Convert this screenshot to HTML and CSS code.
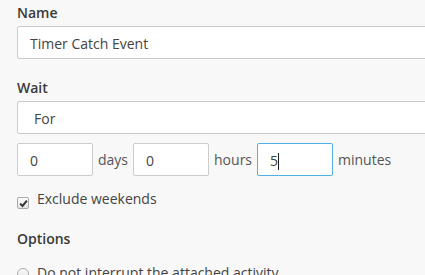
FILE: index.html
```html
<!DOCTYPE html>
<html>
<head>
<meta charset="utf-8">
<link rel="stylesheet" href="styles.css">
</head>
<body>
<div class="panel">
  <div class="group first">
    <label class="label">Name</label>
    <div class="field">Timer Catch Event</div>
  </div>
  <div class="group wait">
    <label class="label">Wait</label>
    <div class="field select">For</div>
  </div>
  <div class="duration">
    <div class="small-input">0</div>
    <span class="unit">days</span>
    <div class="small-input">0</div>
    <span class="unit">hours</span>
    <div class="small-input focused">5<span class="caret"></span></div>
    <span class="unit">minutes</span>
  </div>
  <div class="check-row">
    <span class="checkbox">
      <svg width="9" height="9" viewBox="0 0 9 9"><path d="M1.2 4.6 L3.5 7 L7.9 1.6" fill="none" stroke="#333" stroke-width="2"/></svg>
    </span>
    <span class="check-text">Exclude weekends</span>
  </div>
  <div class="label options">Options</div>
  <div class="radio-row">
    <span class="radio"></span>
    <span class="check-text">Do not interrupt the attached activity</span>
  </div>
</div>
</body>
</html>
```
FILE: styles.css
```css
html, body {
  margin: 0;
  padding: 0;
  background: #f8f8f8;
  overflow: hidden;
}
body {
  width: 425px;
  height: 275px;
  font-family: "Open Sans", "Liberation Sans", sans-serif;
  font-size: 14px;
  line-height: 20px;
  color: #444;
}
.panel {
  padding: 3px 0 0 17px;
}
.group {
  display: flex;
  flex-direction: column;
}
.wait {
  margin-top: 19px;
}
.label {
  font-weight: 600;
  color: #3a3a3a;
  margin-bottom: 3px;
}
.field {
  box-sizing: border-box;
  width: 440px;
  height: 33px;
  padding: 7px 12px 4px 12px;
  background: #fff;
  border: 1px solid #ccc;
  border-radius: 2px;
  color: #444;
}
.select {
  padding-left: 16px;
}
.duration {
  display: flex;
  align-items: center;
  margin-top: 9px;
}
.small-input {
  box-sizing: border-box;
  width: 76px;
  height: 33px;
  padding: 7px 12px 4px 12px;
  background: #fff;
  border: 1px solid #ccc;
  border-radius: 2px;
  color: #444;
  display: flex;
  align-items: flex-start;
}
.small-input.focused {
  border-color: #52b0e4;
}
.caret {
  display: inline-block;
  width: 1px;
  height: 17px;
  margin-top: 2px;
  background: #222;
}
.unit {
  padding: 0 5px;
  color: #555;
}
.check-row {
  display: flex;
  align-items: flex-start;
  margin-top: 13px;
  height: 20px;
}
.checkbox {
  box-sizing: border-box;
  width: 12px;
  height: 12px;
  margin-top: 8px;
  border: 1px solid #aaa;
  border-radius: 2px;
  background: linear-gradient(#fcfcfc, #e4e4e4);
  display: flex;
  align-items: center;
  justify-content: center;
}
.check-text {
  margin-left: 8px;
  color: #444;
}
.options {
  margin-top: 20px;
  margin-bottom: 0;
}
.radio-row {
  display: flex;
  align-items: flex-start;
  margin-top: 14px;
}
.radio {
  box-sizing: border-box;
  width: 12px;
  height: 12px;
  margin-top: 5px;
  border: 1px solid #aaa;
  border-radius: 50%;
  background: linear-gradient(#fcfcfc, #e4e4e4);
}
```
